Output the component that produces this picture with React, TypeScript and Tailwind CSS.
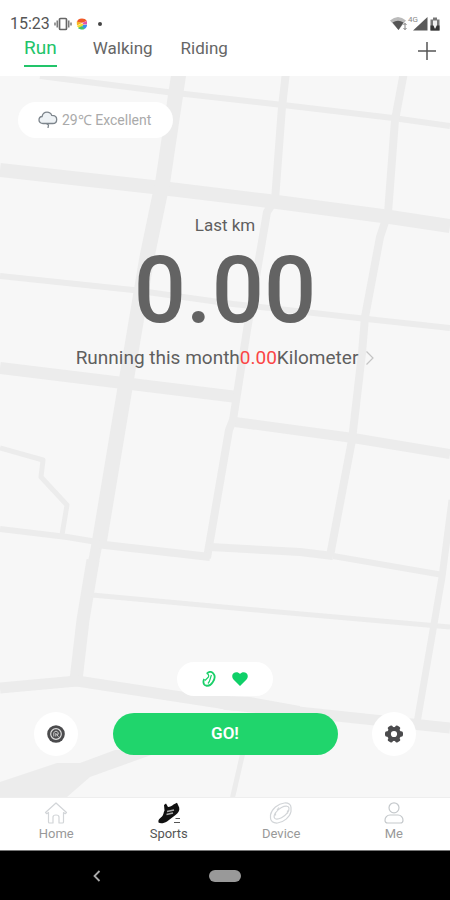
import type { ReactNode } from "react";

const tabs = ["Walking", "Riding"];

const roads = [
  { width: 6, points: "40,76 167,92 283,105 393,118 450,126" },
  { width: 14, points: "0,170 153,187 277,202 390,217 450,226" },
  { width: 6, points: "0,276 133,290 233,304 367,319 450,328" },
  { width: 12, points: "0,368 123,383 237,397" },
  { width: 10, points: "235,422 353,438 450,454" },
  { width: 15, points: "179,72 163,180 147,257 133,340 118,430 99,544" },
  { width: 11, points: "97,544 92,570" },
  { width: 13, points: "93,560 83,620 76,680" },
  { width: 8, points: "286,72 282,107 275,200 267,212 247,330 233,420 229,430 207,558" },
  { width: 8, points: "404,72 395,120 388,213 380,237 365,317 362,353 352,440 330,556" },
  { width: 5, points: "0,448 43,460 41,477 67,505 62,535" },
  { width: 6, points: "0,529 67,537 97,542" },
  { width: 8, points: "96,544 210,557" },
  { width: 8, points: "210,547 300,552 333,556" },
  { width: 6, points: "333,556 443,575" },
  { width: 5, points: "92,595 267,611 450,627" },
  { width: 7, points: "452,500 442,577 433,630 417,723" },
  { width: 11, points: "0,688 77,681 233,705 450,728" },
  { width: 5, points: "243,752 232,800" },
];

const MapBackground = () => (
  <svg
    className="absolute inset-0 h-full w-full"
    viewBox="0 76 450 721"
    preserveAspectRatio="xMidYMid slice"
    aria-hidden="true"
  >
    <g fill="none" stroke="#ececec" strokeLinejoin="round">
      {roads.map((road) => (
        <polyline key={road.points} points={road.points} strokeWidth={road.width} />
      ))}
    </g>
    <path
      d="M0 782 57 763H80L115 750H165L90 777 67 797H0ZM180 694 250 697 300 706 300 715 225 710Z"
      fill="#ececec"
    />
  </svg>
);

const VibrateIcon = () => (
  <svg width="18" height="14" viewBox="0 0 18 14" fill="none" stroke="#666" aria-hidden="true">
    <rect x="5.5" y="1.5" width="7" height="11" rx="1" strokeWidth="1.7" />
    <path d="M3.2 3.5v7M14.8 3.5v7" strokeWidth="1.3" />
    <path d="M1 5.5v3M17 5.5v3" strokeWidth="1.3" />
  </svg>
);

const ColorBallIcon = () => (
  <svg width="12" height="12" viewBox="0 0 12 12" aria-hidden="true">
    <path d="M1 4.5C1 2 3 .5 6 .5c2 0 4 .8 4.8 2.5L6 4.8Z" fill="#f05a28" />
    <path d="M.7 3.5 6 5 1 7.5Z" fill="#f9b621" />
    <path d="M6.5 4.8 11 3v3.5L7 6.5Z" fill="#e454a5" />
    <path d="M.8 8 6 5.5 8 7 3 10Z" fill="#f4dc2b" />
    <path d="M7 7l4-.3c0 2-1 3.5-2.5 4.3L6 9Z" fill="#3593ea" />
    <path d="M2 10l4-2 2.5 3C6.5 12 3.5 11.5 2 10Z" fill="#41c463" />
  </svg>
);

const SignalIcons = () => (
  <svg width="52" height="18" viewBox="0 0 52 18" aria-hidden="true">
    <path d="M0 5.5Q8-1.5 16 5.5L8.5 15Z" fill="#bbb" />
    <path d="M2.5 7.5Q8 4 13.5 7.5L8.5 15Z" fill="#555" />
    <path d="M15 8.5v6M13.5 10 15 8.3 16.5 10M13.5 13 15 14.7 16.5 13" fill="none" stroke="#777" strokeWidth=".9" />
    <text x="18" y="6.5" fontSize="8" fontFamily="Roboto, sans-serif" fill="#888">4G</text>
    <path d="M23 15.5 37.5 2v13.5Z" fill="#5a5a5a" />
    <path d="M40.5 4.5H43V2.5h4v2h2.5v11h-9Z" fill="#777" />
    <path d="M43 5.5h4V10l-2 4-2-3Z" fill="#eee" />
    <path d="M40.5 10.5h3l1.5 4 2-4h2.5v5h-9Z" fill="#333" />
  </svg>
);

const CloudIcon = () => (
  <svg width="20" height="18" viewBox="0 0 20 18" fill="none" stroke="#7d858c" strokeWidth="1.3" strokeLinejoin="round" aria-hidden="true">
    <path
      d="M5 12.5C2.7 12.5 1 11 1 9s1.4-3.4 3.1-3.5C4.6 3 6.5 1.2 9 1.2c2.3 0 4 1.2 4.8 3.2 3 0 4.9 1.6 4.9 4 0 2.5-1.7 4.1-4 4.1Z"
      fill="#eef2f5"
    />
    <path d="M8.5 12.5 10.5 14l-.5 3" />
  </svg>
);

const BandIcon = () => (
  <svg width="14" height="16" viewBox="0 0 14 16" fill="none" stroke="#19cf68" aria-hidden="true">
    <path d="M5 2.5C7 .6 9.5.6 11.2 2.3c2 2.200 1.500 6-.5 8.900C9 13.800 6.500 15.300 4.200 14.500" strokeWidth="1.8" />
    <path d="M2.200 8C1.200 10 1.200 12 2.200 13.500c.7.900 1.700 1.200 2.600 1" strokeWidth="1.8" />
    <path d="M4.500 2.500c1.700.2 2.500 1.500 2 3.500l-3.500 3.500" strokeWidth="1.2" />
    <path d="M9.500 4C8.200 6.500 8.500 9.500 6 12.500" strokeWidth="1.2" />
  </svg>
);

const HeartIcon = () => (
  <svg width="16" height="14" viewBox="0 0 16 14" fill="#0fd068" aria-hidden="true">
    <path d="M8 14 1.5 7.5C-.3 5.5-.1 2.8 1.5 1.3 3.4-.5 6.4-.2 8 2c1.6-2.2 4.6-2.5 6.5-.7 1.6 1.5 1.8 4.2 0 6.2Z" />
  </svg>
);

const TargetIcon = () => (
  <svg width="18" height="18" viewBox="0 0 18 18" fill="none" aria-hidden="true">
    <circle cx="9" cy="9" r="8.8" fill="#4b4b4d" />
    <circle cx="9" cy="9" r="5.3" stroke="#ddd" strokeWidth="1.2" />
    <path d="M6.8 11.5V7.5L9 6l2.2 1.5v1.8H9.5l2 2.5M8.800 8v3.500" stroke="#ccc" strokeWidth="1" />
  </svg>
);

const GearIcon = () => (
  <svg width="18" height="18" viewBox="0 0 18 18" aria-hidden="true">
    <g fill="#4b4b4d">
      <circle cx="9" cy="9" r="7" />
      <rect x="0" y="6.3" width="18" height="5.4" rx="1.8" />
      <rect x="0" y="6.3" width="18" height="5.4" rx="1.8" transform="rotate(60 9 9)" />
      <rect x="0" y="6.3" width="18" height="5.4" rx="1.8" transform="rotate(120 9 9)" />
    </g>
    <circle cx="9" cy="9" r="3.1" fill="#fff" />
  </svg>
);

const HomeIcon = () => (
  <svg width="24" height="22" viewBox="0 0 24 22" fill="none" stroke="#d2d5d8" strokeWidth="1.2" strokeLinejoin="round" aria-hidden="true">
    <path d="M12 1 1.5 10.5l1.3 1.2L4.5 10.5V20q0 1 1 1H9v-6q0-2 3-2t3 2v6h3.5q1 0 1-1v-9.500l1.700 1.200 1.300-1.200Z" />
  </svg>
);

const ShoeIcon = () => (
  <svg width="24" height="22" viewBox="0 0 24 22" aria-hidden="true">
    <path
      d="M1.5 20.5C.8 18 2.5 16.5 5 14.5c1.5-1.3 1.5-4 2.500-6L7 3l2-1.500 2 3.500c2 0 4-1 5.500-2.500L20 .8l2.200 4.700c.8 3-1.200 5.500-3.700 7.500L10 19.500c-3 2-7 2.200-8.500 1Z"
      fill="#111"
    />
    <path d="M10 9.500 17 8M9.500 12.500 16 11" stroke="#aaa" strokeWidth="1.5" />
    <path d="M18.500 16.500H23M17 20.500h6" stroke="#555" strokeWidth="1.2" />
  </svg>
);

const DeviceIcon = () => (
  <svg width="24" height="22" viewBox="0 0 24 22" fill="none" stroke="#d2d5d8" strokeWidth="1.2" aria-hidden="true">
    <path d="M1.500 13C2.500 7 9 1.500 15.500 1c4-.3 6.500 1.500 6.500 4.500v4C21 15 14.500 20.500 8.500 21 4 21.300 1.500 19 1.500 16Z" />
    <path d="M5.500 16C4 13.500 7.500 8 12.500 5.500c3.500-1.800 7-1.800 7.500.5.500 3-3 7.500-7.500 9.700-3 1.500-6 1.800-7 .3Z" />
    <path d="M6.500 10.500v3M18.500 8.500v3M8 8l2-2.500" />
  </svg>
);

const MeIcon = () => (
  <svg width="20" height="22" viewBox="0 0 20 22" fill="none" stroke="#c5c9cc" strokeWidth="1.2" aria-hidden="true">
    <circle cx="10" cy="5.8" r="5" />
    <path d="M6 13h8c3 0 5 2.500 5 5.200 0 1.800-1 2.800-2.700 2.800H3.700C2 21 1 20 1 18.200 1 15.500 3 13 6 13Z" />
  </svg>
);

const menu = [
  { label: "Home", icon: <HomeIcon />, active: false },
  { label: "Sports", icon: <ShoeIcon />, active: true },
  { label: "Device", icon: <DeviceIcon />, active: false },
  { label: "Me", icon: <MeIcon />, active: false },
];

const RoundButton = ({ label, children }: { label: string; children: ReactNode }) => (
  <button
    type="button"
    aria-label={label}
    className="flex size-11 items-center justify-center justify-self-center rounded-full bg-white"
  >
    {children}
  </button>
);

const Header = () => (
  <header className="bg-white pt-4">
    <div className="flex h-4 items-center justify-between pr-2 pl-2.5 text-base leading-4 text-[#555]">
      <div className="flex items-center gap-1">
        <span>15:23</span>
        <VibrateIcon />
        <ColorBallIcon />
        <span className="ml-1.5 size-1 rounded-full bg-[#444]" />
      </div>
      <SignalIcons />
    </div>
    <div className="flex h-11 items-start justify-between pt-1 pr-3.5 pl-6">
      <nav className="flex items-start text-[17px] leading-6 text-[#666]">
        <a href="#run" className="mr-9 border-b-2 border-[#22c46a] pb-[5px] text-[19px] text-[#22c46a]">
          Run
        </a>
        {tabs.map((tab) => (
          <a key={tab} href={`#${tab.toLowerCase()}`} className="mr-7">
            {tab}
          </a>
        ))}
      </nav>
      <button type="button" aria-label="Add" className="pt-1.5">
        <svg width="18" height="18" viewBox="0 0 18 18" stroke="#555" strokeWidth="1.5" aria-hidden="true">
          <path d="M9 0v18M0 9h18" />
        </svg>
      </button>
    </div>
  </header>
);

export default function App() {
  return (
    <div className="flex min-h-screen flex-col bg-white font-['Roboto',sans-serif]">
      <Header />
      <main className="relative flex flex-1 flex-col bg-[#f7f7f7]">
        <MapBackground />
        <div className="relative flex flex-1 flex-col pt-6.5 pb-[41px]">
          <div className="ml-4.5 flex h-9 items-center gap-1 self-start rounded-full bg-white px-5 text-sm text-[#aaa]">
            <CloudIcon />
            <span className="mr-0.5">29℃ Excellent</span>
          </div>
          <section className="mt-[75px] flex flex-col items-center text-[#5f5f5f]">
            <h1 className="text-[17px] leading-6">Last km</h1>
            <p className="text-[92px] leading-27 font-medium text-[#636363]">0.00</p>
            <a href="#month" className="flex items-center gap-2 text-[19px] leading-6.5">
              <span>
                Running this month<span className="text-[#fb4545]">0.00</span>Kilometer
              </span>
              <svg width="8" height="14" viewBox="0 0 8 14" fill="none" stroke="#c4c4c4" strokeWidth="1.2" aria-hidden="true">
                <path d="M.5.5 7 7 .5 13.5" />
              </svg>
            </a>
          </section>
          <div className="mt-auto flex h-8.5 w-24 items-center justify-center gap-4 self-center rounded-full bg-white">
            <BandIcon />
            <HeartIcon />
          </div>
          <div className="mt-4 grid grid-cols-4 items-center">
            <RoundButton label="Goal">
              <TargetIcon />
            </RoundButton>
            <button type="button" className="col-span-2 h-10.5 rounded-full bg-[#20d56c] text-[17px] font-semibold text-white">
              GO!
            </button>
            <RoundButton label="Settings">
              <GearIcon />
            </RoundButton>
          </div>
        </div>
      </main>
      <nav className="grid h-[53px] grid-cols-4 border-t border-[#eee] bg-white pt-1 text-[13px] leading-4 text-[#999]">
        {menu.map((item) => (
          <a key={item.label} href={`#${item.label.toLowerCase()}`} className="flex flex-col items-center gap-0.5">
            {item.icon}
            <span className={item.active ? "text-[#555]" : undefined}>{item.label}</span>
          </a>
        ))}
      </nav>
      <div className="grid h-12.5 grid-cols-4 items-center border-t border-[#777] bg-black">
        <button type="button" aria-label="Back" className="mr-3 justify-self-end">
          <svg width="8" height="12" viewBox="0 0 8 12" fill="none" stroke="#aaa" strokeWidth="1.8" aria-hidden="true">
            <path d="M6.5 1 1.5 6l5 5" />
          </svg>
        </button>
        <button
          type="button"
          aria-label="Home screen"
          className="col-span-2 h-3 w-8 justify-self-center rounded-full bg-[#999]"
        />
      </div>
    </div>
  );
}
